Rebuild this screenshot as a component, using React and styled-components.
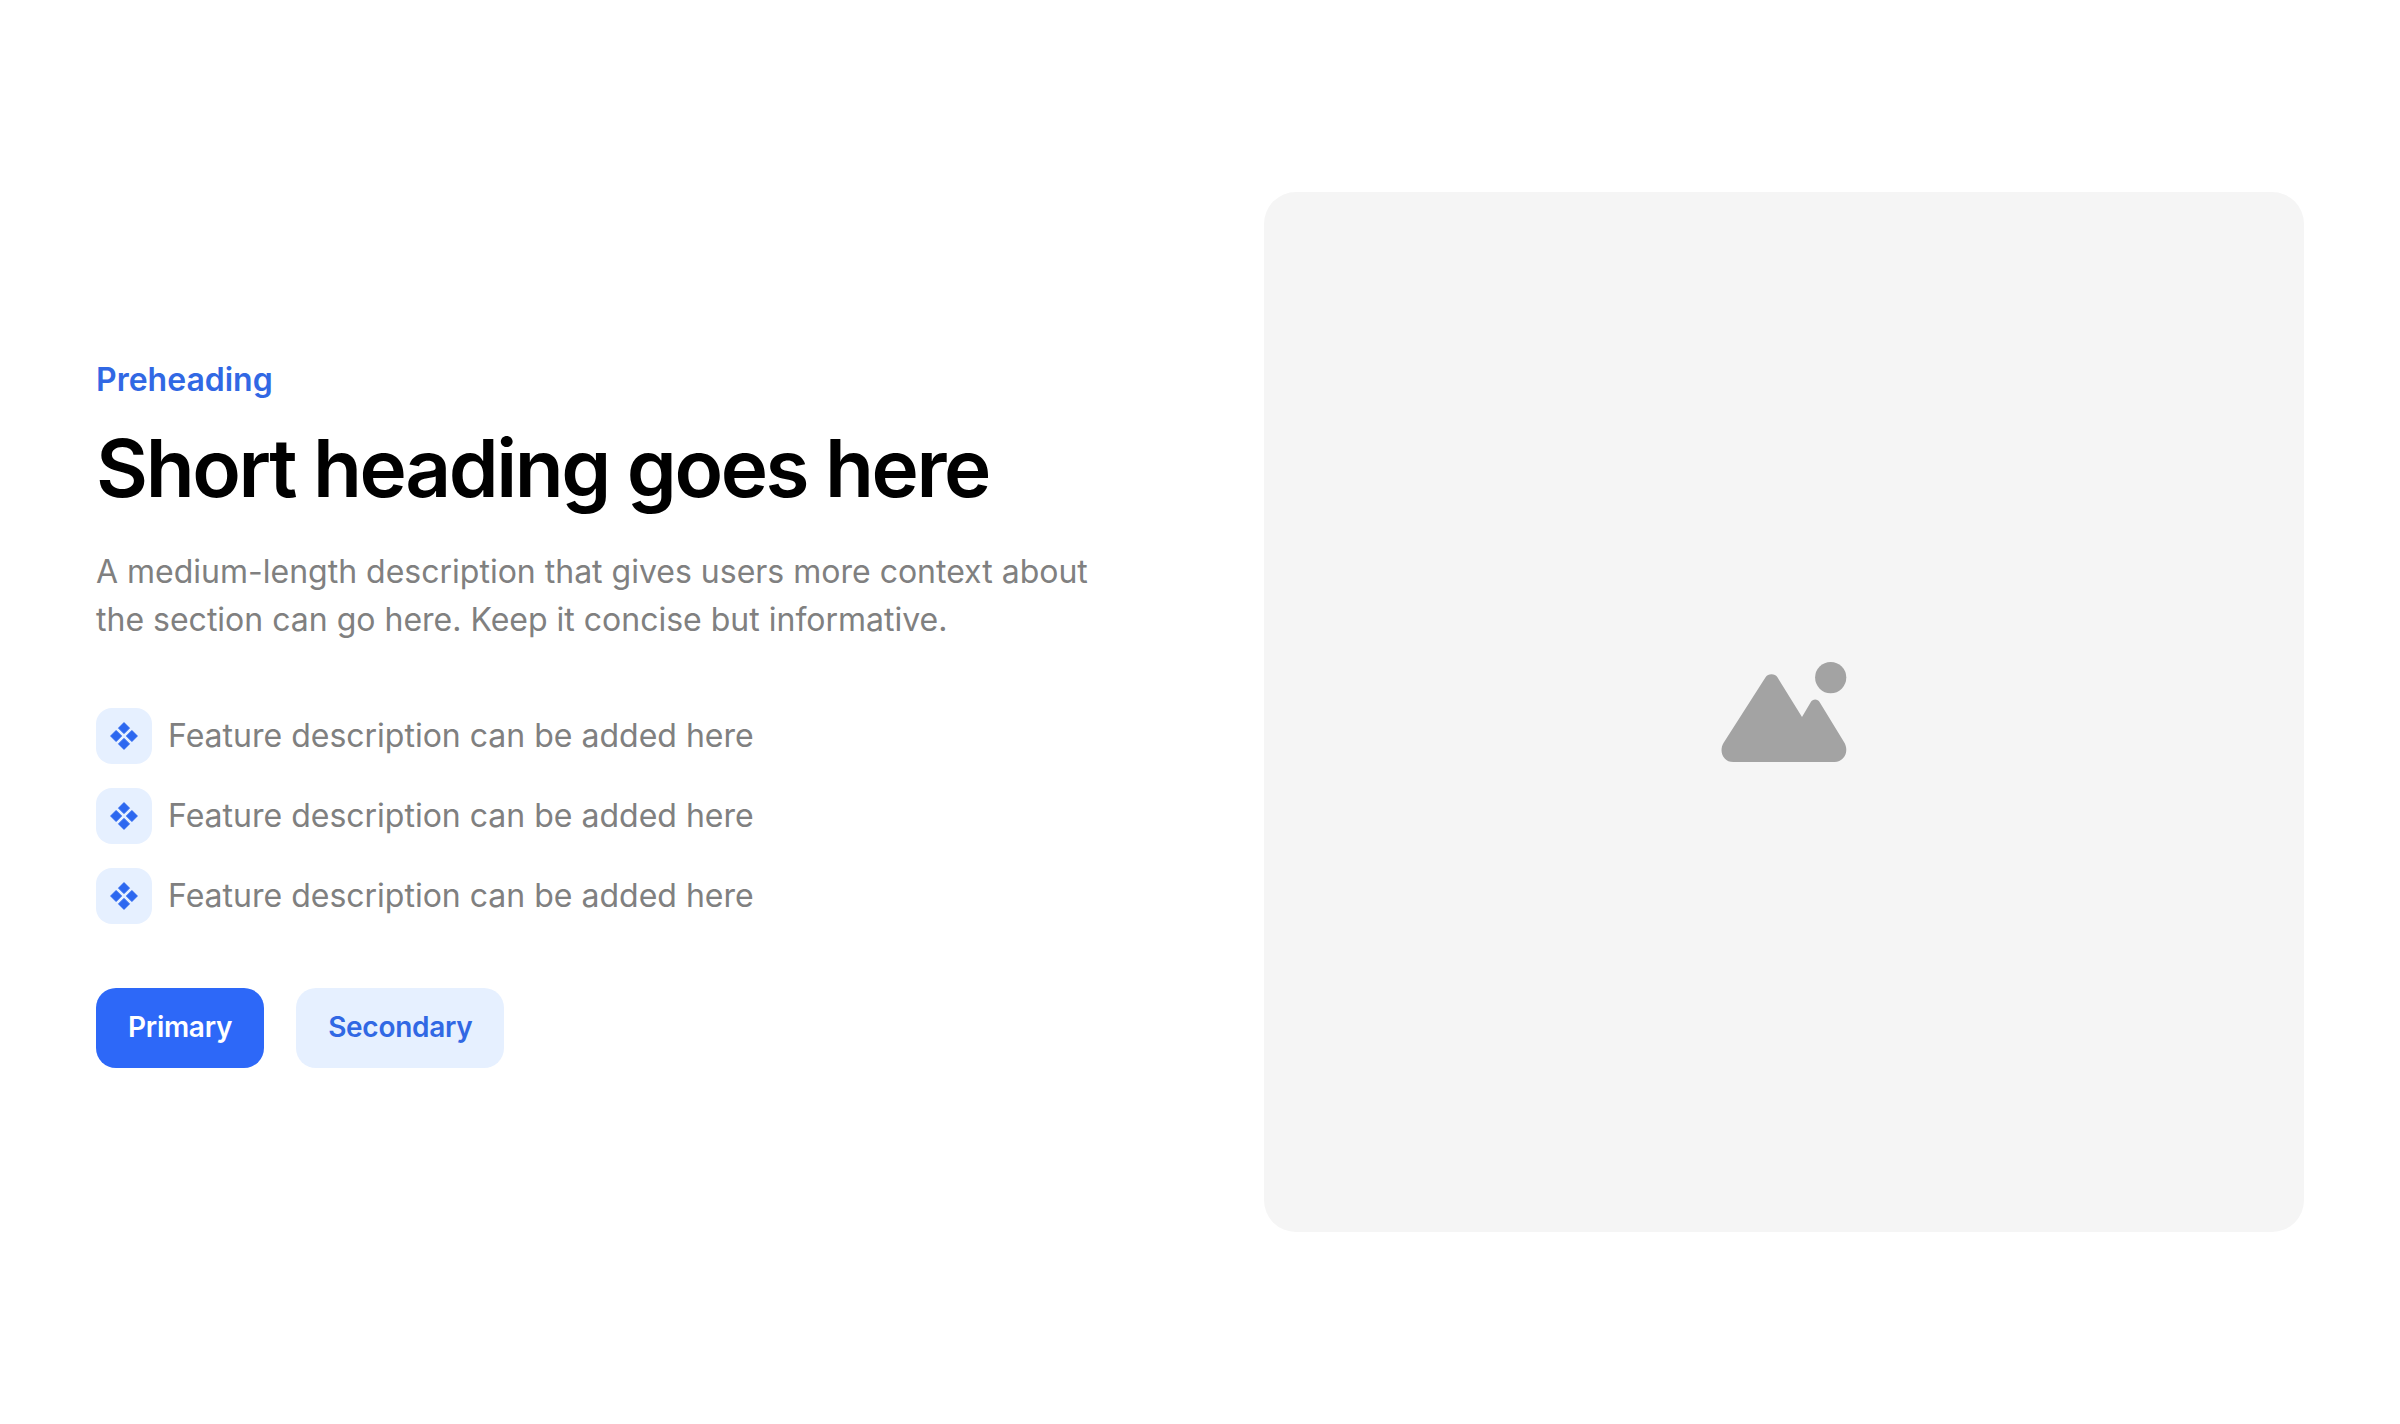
import React from "react";
import styled, { createGlobalStyle } from "styled-components";

const GlobalStyle = createGlobalStyle`
  * {
    box-sizing: border-box;
  }
  body {
    margin: 0;
    background: #fff;
    font-family: Inter, sans-serif;
  }
  h1, p, ul {
    margin: 0;
    padding: 0;
  }
`;

const Section = styled.section`
  display: grid;
  grid-template-columns: 1fr 1fr;
  align-items: center;
  gap: 128px;
  min-height: 1424px;
  padding: 192px 96px;
`;

const Content = styled.div`
  display: flex;
  flex-direction: column;
`;

const Preheading = styled.p`
  color: #3168e4;
  font-size: 32px;
  font-weight: 600;
  line-height: 48px;
`;

const Heading = styled.h1`
  margin-top: 16px;
  color: #000;
  font-size: 80px;
  font-weight: 600;
  line-height: 96px;
  letter-spacing: -0.03em;
`;

const Description = styled.p`
  margin-top: 32px;
  color: #808080;
  font-size: 32px;
  line-height: 48px;
`;

const FeatureList = styled.ul`
  display: flex;
  flex-direction: column;
  gap: 24px;
  margin-top: 64px;
  list-style: none;
`;

const FeatureItem = styled.li`
  display: flex;
  align-items: center;
  gap: 16px;
  color: #808080;
  font-size: 32px;
  line-height: 48px;
`;

const FeatureIcon = styled.span`
  display: flex;
  align-items: center;
  justify-content: center;
  width: 56px;
  height: 56px;
  border-radius: 16px;
  background: #e6f0ff;
`;

const Actions = styled.div`
  display: flex;
  gap: 32px;
  margin-top: 64px;
`;

const Button = styled.button`
  height: 80px;
  padding: 0 32px 2px;
  border: none;
  border-radius: 20px;
  background: ${({ $primary }) => ($primary ? "#2d68f8" : "#e6f0ff")};
  color: ${({ $primary }) => ($primary ? "#fff" : "#3168e4")};
  font-family: inherit;
  font-size: 28px;
  font-weight: 600;
  line-height: 40px;
  letter-spacing: -0.01em;
  cursor: pointer;
`;

const Media = styled.div`
  display: flex;
  align-items: center;
  justify-content: center;
  aspect-ratio: 1;
  border-radius: 32px;
  background: #f5f5f5;
`;

const DiamondsSvg = () => (
  <svg
    width="30"
    height="30"
    viewBox="0 0 30 30"
    fill="#2d68f0"
    stroke="#2d68f0"
    strokeLinejoin="round"
  >
    <path d="M15 1.6l5.5 5.5-5.5 5.5-5.5-5.5zM7.1 9.5l5.5 5.5-5.5 5.5L1.6 15zM22.9 9.5l5.5 5.5-5.5 5.5-5.5-5.5zM15 17.4l5.5 5.5-5.5 5.5-5.5-5.5z" />
  </svg>
);

const PlaceholderSvg = () => (
  <svg width="126" height="102" viewBox="-0.5 -1 126 102" fill="#a3a3a3">
    <circle cx="109.2" cy="15.6" r="15.6" />
    <path d="M43.9 15.6C46.5 11.2 53.5 11.2 56.1 15.6L80.5 55L89.2 40.2C91.2 36.6 96.2 36.6 98.2 40.2L123.1 81C127.7 89.8 122.5 100 113 100H11.8C2 100-3 89.8 2 81Z" />
  </svg>
);

const features = [
  "Feature description can be added here",
  "Feature description can be added here",
  "Feature description can be added here",
];

const App = () => {
  return (
    <>
      <GlobalStyle />
      <Section>
        <Content>
          <Preheading>Preheading</Preheading>
          <Heading>Short heading goes here</Heading>
          <Description>
            A medium-length description that gives users more context about the
            section can go here. Keep it concise but informative.
          </Description>
          <FeatureList>
            {features.map((feature, index) => (
              <FeatureItem key={index}>
                <FeatureIcon>
                  <DiamondsSvg />
                </FeatureIcon>
                {feature}
              </FeatureItem>
            ))}
          </FeatureList>
          <Actions>
            <Button $primary>Primary</Button>
            <Button>Secondary</Button>
          </Actions>
        </Content>
        <Media>
          <PlaceholderSvg />
        </Media>
      </Section>
    </>
  );
};

export default App;
